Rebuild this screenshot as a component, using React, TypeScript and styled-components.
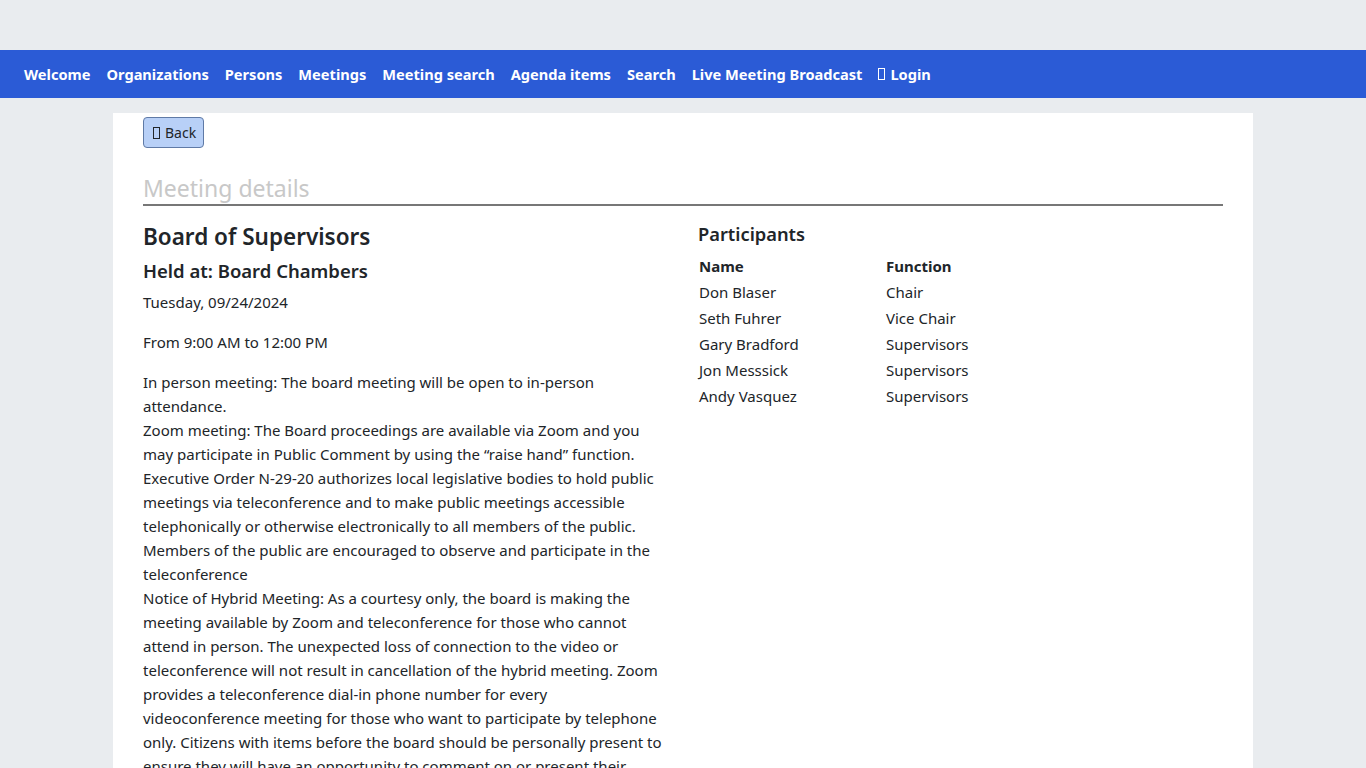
import React from "react";
import styled, { createGlobalStyle } from "styled-components";

const Global = createGlobalStyle`
  html, body { margin: 0; padding: 0; }
  body {
    background: #e9ecef;
    font-family: "Noto Sans", "Open Sans", sans-serif;
    color: #212529;
    font-size: 15px;
    line-height: 24px;
  }
`;

const Page = styled.div`
  padding-top: 50px;
  min-height: 768px;
`;

const NavBar = styled.nav`
  height: 48px;
  background: #2b5bd6;
  display: flex;
  align-items: center;
  padding: 0 16px;
`;

const NavLink = styled.a`
  color: #ffffff;
  font-weight: 700;
  font-size: 14.6px;
  padding: 0 8px;
  text-decoration: none;
  display: inline-flex;
  align-items: center;
  gap: 5px;
  white-space: nowrap;
`;

const Tofu = styled.span<{ $dark?: boolean }>`
  display: inline-block;
  width: 7px;
  height: 12px;
  border: 1px solid ${(p) => (p.$dark ? "#212529" : "#ffffff")};
  box-sizing: border-box;
`;

const Strip = styled.div`
  height: 15px;
`;

const Card = styled.main`
  width: 1140px;
  margin: 0 auto;
  background: #ffffff;
  box-sizing: border-box;
  padding: 4px 30px 30px;
  min-height: 655px;
`;

const BackButton = styled.button`
  font-family: inherit;
  font-size: 14px;
  line-height: 20px;
  color: #212529;
  background: #b8d0f7;
  border: 1px solid #5f7aa6;
  border-radius: 4px;
  padding: 5px 7px 5px 9px;
  display: inline-flex;
  align-items: center;
  gap: 5px;
  height: 31px;
  box-sizing: border-box;
`;

const SectionTitle = styled.h2`
  margin: 24px 0 0;
  font-size: 23px;
  font-weight: 400;
  line-height: 32px;
  color: #c8c8c8;
  border-bottom: 2px solid #777777;
`;

const Row = styled.div`
  display: grid;
  grid-template-columns: 1fr 1fr;
  column-gap: 30px;
  padding-top: 16px;
`;

const Column = styled.section<{ $inset?: number }>`
  min-width: 0;
  padding-right: ${(p) => p.$inset ?? 0}px;
`;

const Title = styled.h3`
  margin: 0 0 8px;
  font-size: 22.5px;
  font-weight: 600;
  line-height: 29px;
`;

const SubTitle = styled.h4`
  margin: 0 0 7px;
  font-size: 18.5px;
  font-weight: 600;
  line-height: 24px;
`;

const Para = styled.p`
  margin: 0 0 16px;
`;

const ParticipantsTitle = styled.h4`
  margin: 0 0 7px;
  font-size: 18.3px;
  font-weight: 600;
  line-height: 24px;
`;

const Table = styled.div`
  display: grid;
  grid-template-columns: 187px auto;
  justify-content: start;
`;

const Cell = styled.div<{ $head?: boolean }>`
  padding: 1px 1px;
  line-height: 24px;
  font-weight: ${(p) => (p.$head ? 700 : 400)};
`;

const navItems = [
  "Welcome",
  "Organizations",
  "Persons",
  "Meetings",
  "Meeting search",
  "Agenda items",
  "Search",
  "Live Meeting Broadcast",
];

const participants = [
  ["Don Blaser", "Chair"],
  ["Seth Fuhrer", "Vice Chair"],
  ["Gary Bradford", "Supervisors"],
  ["Jon Messsick", "Supervisors"],
  ["Andy Vasquez", "Supervisors"],
];

export default function App() {
  return (
    <Page>
      <Global />
      <NavBar>
        {navItems.map((n) => (
          <NavLink key={n} href="#">
            {n}
          </NavLink>
        ))}
        <NavLink href="#">
          <Tofu /> Login
        </NavLink>
      </NavBar>
      <Strip />
      <Card>
        <BackButton>
          <Tofu $dark /> Back
        </BackButton>
        <SectionTitle>Meeting details</SectionTitle>
        <Row>
          <Column $inset={4}>
            <Title>Board of Supervisors</Title>
            <SubTitle>Held at: Board Chambers</SubTitle>
            <Para>Tuesday, 09/24/2024</Para>
            <Para>From 9:00 AM to 12:00 PM</Para>
            <Para>
              In person meeting: The board meeting will be open to in-person attendance.
              <br />
              Zoom meeting: The Board proceedings are available via Zoom and you may participate in
              Public Comment by using the “raise hand” function.
              <br />
              Executive Order N-29-20 authorizes local legislative bodies to hold public meetings via
              teleconference and to make public meetings accessible telephonically or otherwise
              electronically to all members of the public. Members of the public are encouraged to
              observe and participate in the teleconference
              <br />
              Notice of Hybrid Meeting: As a courtesy only, the board is making the meeting available
              by Zoom and teleconference for those who cannot attend in person. The unexpected loss of
              connection to the video or teleconference will not result in cancellation of the hybrid
              meeting. Zoom provides a teleconference dial-in phone number for every videoconference
              meeting for those who want to participate by telephone only. Citizens with items before
              the board should be personally present to ensure they will have an opportunity to
              comment on or present their items.
            </Para>
          </Column>
          <Column>
            <ParticipantsTitle>Participants</ParticipantsTitle>
            <Table>
              <Cell $head>Name</Cell>
              <Cell $head>Function</Cell>
              {participants.map(([name, fn]) => (
                <React.Fragment key={name}>
                  <Cell>{name}</Cell>
                  <Cell>{fn}</Cell>
                </React.Fragment>
              ))}
            </Table>
          </Column>
        </Row>
      </Card>
    </Page>
  );
}
